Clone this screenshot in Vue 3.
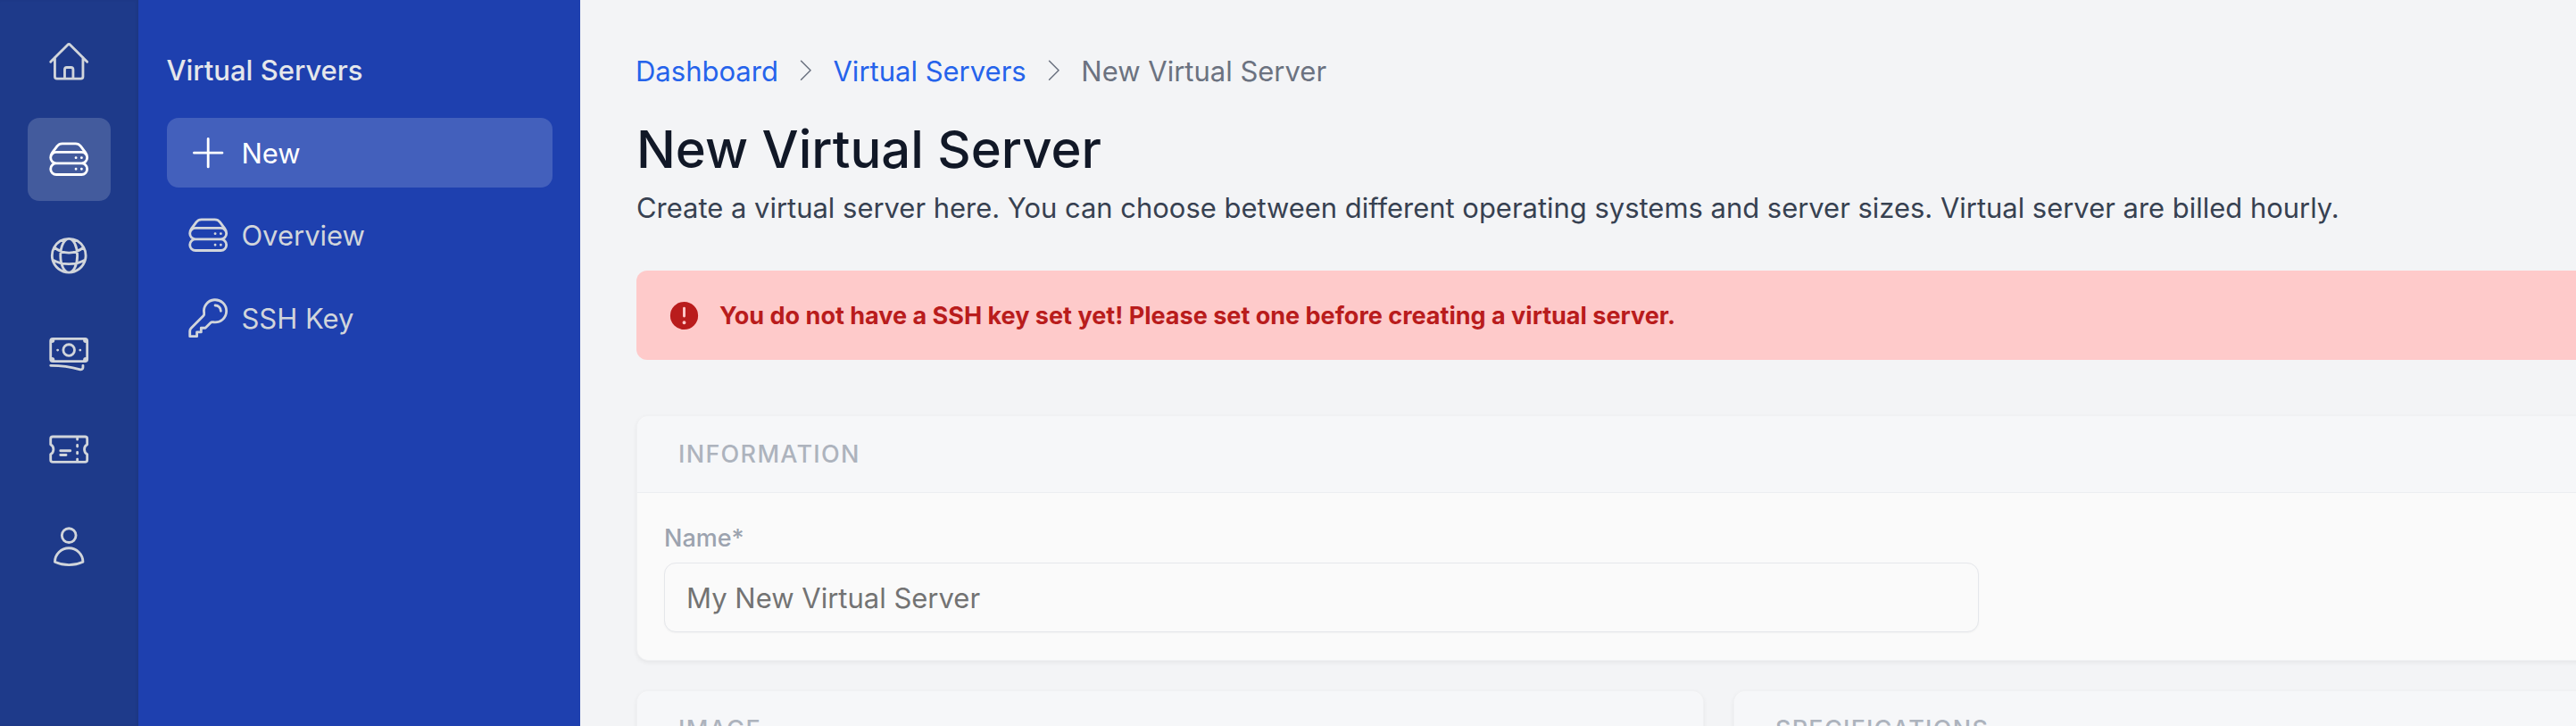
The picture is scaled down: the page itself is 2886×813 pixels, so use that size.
<template>
  <div class="page">
    <!-- icon rail -->
    <nav class="rail">
      <a v-for="item in railItems" :key="item.name" class="rail-item" :class="{ active: item.active }">
        <svg class="icon" viewBox="0 0 24 24" fill="none" stroke="currentColor"><path :d="icons[item.name]" /></svg>
      </a>
    </nav>

    <!-- sub navigation -->
    <aside class="sidebar">
      <h2 class="sidebar-title">Virtual Servers</h2>
      <a v-for="link in sideLinks" :key="link.label" class="side-link" :class="{ active: link.active }">
        <svg class="icon" viewBox="0 0 24 24" fill="none" stroke="currentColor"><path :d="icons[link.icon]" /></svg>
        <span>{{ link.label }}</span>
      </a>
    </aside>

    <main class="main">
      <div class="content">
        <div class="breadcrumb">
          <a>Dashboard</a>
          <svg class="chevron" viewBox="0 0 24 24" fill="none" stroke="currentColor"><path :d="icons.chevron" /></svg>
          <a>Virtual Servers</a>
          <svg class="chevron" viewBox="0 0 24 24" fill="none" stroke="currentColor"><path :d="icons.chevron" /></svg>
          <span>New Virtual Server</span>
        </div>

        <h1 class="title">New Virtual Server</h1>
        <p class="desc">Create a virtual server here. You can choose between different operating systems and server sizes. Virtual server are billed hourly.</p>

        <div class="alert">
          <svg class="alert-icon" viewBox="0 0 20 20" fill="currentColor"><path fill-rule="evenodd" clip-rule="evenodd" d="M18 10a8 8 0 11-16 0 8 8 0 0116 0zm-8-5a.75.75 0 01.75.75v4.5a.75.75 0 01-1.5 0v-4.5A.75.75 0 0110 5zm0 10a1 1 0 100-2 1 1 0 000 2z" /></svg>
          <span>You do not have a SSH key set yet! Please set one before creating a virtual server.</span>
        </div>

        <section class="card info-card">
          <header class="card-header">Information</header>
          <div class="card-body">
            <label class="field-label" for="name">Name*</label>
            <input id="name" class="field-input" type="text" placeholder="My New Virtual Server" />
          </div>
        </section>

        <div class="card-row">
          <section class="card">
            <header class="card-header">Image</header>
          </section>
          <section class="card">
            <header class="card-header">Specifications</header>
          </section>
        </div>
      </div>
    </main>
  </div>
</template>

<script setup>
const icons = {
  home: 'M2.25 12l8.954-8.955c.44-.439 1.152-.439 1.591 0L21.75 12M4.5 9.75v10.125c0 .621.504 1.125 1.125 1.125H9.75v-4.875c0-.621.504-1.125 1.125-1.125h2.25c.621 0 1.125.504 1.125 1.125V21h4.125c.621 0 1.125-.504 1.125-1.125V9.75M8.25 21h8.25',
  server: 'M5.25 14.25h13.5m-13.5 0a3 3 0 01-3-3m3 3a3 3 0 100 6h13.5a3 3 0 100-6m-16.5-3a3 3 0 013-3h13.5a3 3 0 013 3m-19.5 0a4.5 4.5 0 01.9-2.7L5.737 5.1a3.375 3.375 0 012.7-1.35h7.126c1.062 0 2.062.5 2.7 1.35l2.587 3.45a4.5 4.5 0 01.9 2.7m0 0a3 3 0 01-3 3m0 3h.008v.008h-.008v-.008zm0-6h.008v.008h-.008v-.008zm-3 6h.008v.008h-.008v-.008zm0-6h.008v.008h-.008v-.008z',
  globe: 'M12 21a9.004 9.004 0 008.716-6.747M12 21a9.004 9.004 0 01-8.716-6.747M12 21c2.485 0 4.5-4.03 4.5-9S14.485 3 12 3m0 18c-2.485 0-4.5-4.03-4.5-9S9.515 3 12 3m0 0a8.997 8.997 0 017.843 4.582M12 3a8.997 8.997 0 00-7.843 4.582m15.686 0A11.953 11.953 0 0112 10.5c-2.998 0-5.74-1.1-7.843-2.918m15.686 0A8.959 8.959 0 0121 12c0 .778-.099 1.533-.284 2.253m0 0A17.919 17.919 0 0112 16.5c-3.162 0-6.133-.815-8.716-2.247m0 0A9.015 9.015 0 013 12c0-1.605.42-3.113 1.157-4.418',
  banknotes: 'M2.25 18.75a60.07 60.07 0 0115.797 2.101c.727.198 1.453-.342 1.453-1.096V18.75M3.75 4.5v.75A.75.75 0 013 6h-.75m0 0v-.375c0-.621.504-1.125 1.125-1.125H20.25M2.25 6v9m18-10.5v.75c0 .414.336.75.75.75h.75m-1.5-1.5h.375c.621 0 1.125.504 1.125 1.125v9.75c0 .621-.504 1.125-1.125 1.125h-.375m1.5-1.5H21a.75.75 0 00-.75.75v.75m0 0H3.75m0 0h-.375a1.125 1.125 0 01-1.125-1.125V15m1.5 1.5v-.75A.75.75 0 003 15h-.75M15 10.5a3 3 0 11-6 0 3 3 0 016 0zm3 0h.008v.008H18V10.5zm-12 0h.008v.008H6V10.5z',
  ticket: 'M16.5 6v.75m0 3v.75m0 3v.75m0 3V18m-9-5.25h5.25M7.5 15h3M3.375 5.25c-.621 0-1.125.504-1.125 1.125v3.026a2.999 2.999 0 010 5.198v3.026c0 .621.504 1.125 1.125 1.125h17.25c.621 0 1.125-.504 1.125-1.125v-3.026a2.999 2.999 0 010-5.198V6.375c0-.621-.504-1.125-1.125-1.125H3.375z',
  user: 'M15.75 6a3.75 3.75 0 11-7.5 0 3.75 3.75 0 017.5 0zM4.501 20.118a7.5 7.5 0 0114.998 0A17.933 17.933 0 0112 21.75c-2.676 0-5.216-.584-7.499-1.632z',
  plus: 'M12 4.5v15m7.5-7.5h-15',
  key: 'M15.75 5.25a3 3 0 013 3m3 0a6 6 0 01-7.029 5.912c-.563-.097-1.159.026-1.563.43L10.5 17.25H8.25v2.25H6v2.25H2.25v-2.818c0-.597.237-1.17.659-1.591l6.499-6.499c.404-.404.527-1 .43-1.563A6 6 0 1121.75 8.25z',
  chevron: 'M8.25 4.5l7.5 7.5-7.5 7.5'
}

const railItems = [
  { name: 'home' },
  { name: 'server', active: true },
  { name: 'globe' },
  { name: 'banknotes' },
  { name: 'ticket' },
  { name: 'user' }
]

const sideLinks = [
  { label: 'New', icon: 'plus', active: true },
  { label: 'Overview', icon: 'server' },
  { label: 'SSH Key', icon: 'key' }
]
</script>

<style>
html,
body {
  margin: 0;
  overflow: hidden;
}
</style>

<style scoped>
.page {
  display: flex;
  height: 100vh;
  overflow: hidden;
  font-family: Inter, "Liberation Sans", sans-serif;
  background: #f3f4f6;
}

.rail {
  flex: 0 0 155px;
  box-sizing: border-box;
  padding-top: 23px;
  display: flex;
  flex-direction: column;
  align-items: center;
  gap: 15.5px;
  background: #1e3a8a;
  box-shadow: inset -2px 0 3px rgba(0, 0, 0, 0.06);
}

.rail-item {
  width: 93px;
  height: 93px;
  flex: none;
  display: flex;
  align-items: center;
  justify-content: center;
  border-radius: 13px;
  color: #d1d5db;
}

.rail-item.active {
  background: rgba(255, 255, 255, 0.17);
  color: #fff;
}

.icon {
  width: 50.4px;
  height: 50.4px;
  flex: none;
  stroke-width: 1.35;
  stroke-linecap: round;
  stroke-linejoin: round;
}

.sidebar {
  flex: 0 0 495px;
  box-sizing: border-box;
  padding: 0 31px 0 31.5px;
  background: #1e40af;
}

.sidebar-title {
  margin: 0;
  height: 132px;
  padding-top: 57px;
  box-sizing: border-box;
  font-size: 31px;
  line-height: 44px;
  font-weight: 500;
  color: #e5e7eb;
}

.side-link {
  height: 77.5px;
  margin-bottom: 15.2px;
  padding-left: 21px;
  display: flex;
  align-items: center;
  gap: 12.5px;
  border-radius: 13px;
  font-size: 31px;
  color: #d1d5db;
}

.side-link.active {
  background: rgba(255, 255, 255, 0.17);
  color: #fff;
}

.side-link.active span {
  padding-top: 2px;
}

.main {
  flex: 1;
  min-width: 0;
  overflow: hidden;
}

.content {
  width: 2425px;
  padding: 57px 0 0 63px;
}

.breadcrumb {
  display: flex;
  align-items: center;
  height: 44px;
  font-size: 31px;
  color: #6b7280;
  margin-left: -1px;
}

.breadcrumb a {
  color: #2563eb;
}

.chevron {
  width: 33.6px;
  height: 33.6px;
  margin: 0 14px;
  stroke-width: 1.1;
  stroke-linecap: round;
  stroke-linejoin: round;
  color: #6b7280;
}

.title {
  margin: 31px 0 0;
  font-size: 58px;
  line-height: 70px;
  font-weight: 500;
  color: #111827;
}

.desc {
  margin: 9px 0 0;
  font-size: 30.95px;
  line-height: 44px;
  color: #374151;
}

.alert {
  margin-top: 48px;
  height: 100px;
  box-sizing: border-box;
  padding-left: 34px;
  display: flex;
  align-items: center;
  gap: 20px;
  border-radius: 12px;
  background: #fecaca;
  color: #b91c1c;
  font-size: 27.03px;
  font-weight: 700;
}

.alert-icon {
  width: 39px;
  height: 39px;
  flex: none;
}

.card {
  box-sizing: border-box;
  border: 1px solid #f0f1f3;
  border-radius: 13px;
  background: #fafafa;
  box-shadow: 0 2px 5px rgba(0, 0, 0, 0.06);
}

.info-card {
  margin-top: 62px;
  height: 275px;
}

.card-header {
  height: 86px;
  box-sizing: border-box;
  padding: 0 0 0 46px;
  display: flex;
  align-items: center;
  border-bottom: 1px solid #eceef1;
  border-radius: 13px 13px 0 0;
  background: #f6f7f9;
  font-size: 27px;
  font-weight: 500;
  letter-spacing: 1.3px;
  text-transform: uppercase;
  color: #adb3bd;
}

.card-body {
  padding: 31px 0 0 30px;
}

.field-label {
  display: block;
  height: 40px;
  line-height: 40px;
  font-size: 27px;
  font-weight: 500;
  color: #9ca3af;
}

.field-input {
  display: block;
  width: 1473px;
  height: 78px;
  margin-top: 7px;
  box-sizing: border-box;
  padding: 0 24px;
  border: 1px solid #e5e7eb;
  border-radius: 13px;
  background: #fafafa;
  font-family: inherit;
  font-size: 31px;
  box-shadow: 0 1px 2px rgba(0, 0, 0, 0.04);
}

.field-input::placeholder {
  color: #737373;
  opacity: 1;
}

.card-row {
  margin-top: 33px;
  display: grid;
  grid-template-columns: 1196px 1196px;
  gap: 33px;
}
</style>
